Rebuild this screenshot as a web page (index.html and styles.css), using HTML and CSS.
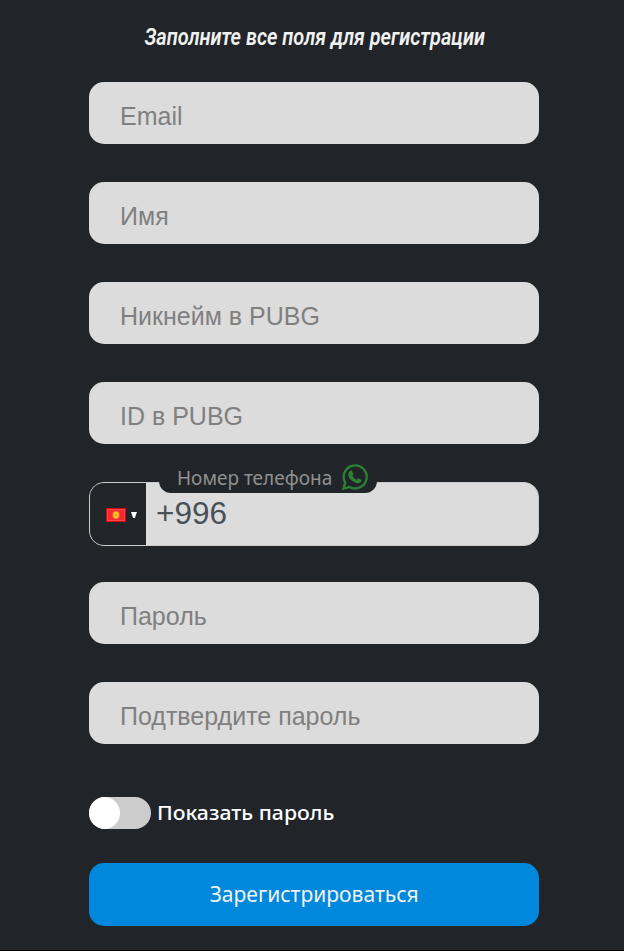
FILE: index.html
```html
<!DOCTYPE html>
<html lang="ru">
<head>
<meta charset="utf-8">
<title>Регистрация</title>
<link rel="stylesheet" href="styles.css">
</head>
<body>
<form class="form">
  <h1 class="title"><span class="title-text">Заполните все поля для регистрации</span></h1>
  <input class="field" type="email" placeholder="Email">
  <input class="field" type="text" placeholder="Имя">
  <input class="field" type="text" placeholder="Никнейм в PUBG">
  <input class="field" type="text" placeholder="ID в PUBG">
  <div class="phone">
    <div class="country">
      <svg class="flag" viewBox="0 0 20 14"><rect width="20" height="14" fill="#df0404"/><rect x="1" y="1" width="18" height="12" fill="#f9484c"/><rect x="2" y="2" width="16" height="10" fill="#f12a31"/><ellipse cx="10" cy="7" rx="3.7" ry="4" fill="#f7752a"/><ellipse cx="10" cy="7" rx="2.7" ry="3.2" fill="#ffc52e"/><ellipse cx="10" cy="7" rx="1" ry="1.6" fill="#f39a24"/></svg>
      <svg class="caret" viewBox="0 0 6 6"><path d="M0 0h6L3.8 6H2.2z" fill="#fff"/></svg>
    </div>
    <div class="number">+996</div>
    <label class="phone-label"><span class="phone-text">Номер телефона</span>
      <svg class="whatsapp" viewBox="0 0 26 26"><path d="M1.5 24.6 3.2 18.6A11.5 11.5 0 1 1 7.5 22.9Z" fill="none" stroke="#2c8134" stroke-width="2.3"/><path d="M8.3 6.8c.5-.5 1.5-.5 1.8.1l1.2 2.8c.2.6-.2 1.1-1.1 2.1 1.1 1.9 2.3 3 4.4 4 .8-.9 1.2-1.6 1.8-1.4l2.7 1.3c.7.4.3 1.7-.2 2.3-1.3 1.3-3.1 1.5-4.9.9-3.5-1.2-5.5-3.1-7.1-5.9-1.1-2-.7-4.7 1.4-6.2z" fill="#2c8134"/></svg>
    </label>
  </div>
  <input class="field" type="password" placeholder="Пароль">
  <input class="field" type="password" placeholder="Подтвердите пароль">
  <label class="switch-row"><span class="switch"><span class="knob"></span></span><span class="switch-text">Показать пароль</span></label>
  <button class="submit" type="button"><span class="submit-text">Зарегистрироваться</span></button>
</form>
</body>
</html>
```
FILE: styles.css
```css
* { box-sizing: border-box; }
body {
  margin: 0;
  height: 951px;
  background: #212529;
  border-bottom: 1px solid #000;
  font-family: "Liberation Sans", sans-serif;
  overflow: hidden;
}
.form {
  width: 450px;
  margin-left: 89px;
  padding-top: 22px;
}
.title {
  display: flex;
  justify-content: center;
  margin: 0 0 30px;
  padding-left: 2px;
  height: 30px;
  font: italic 600 24px/30px Roboto, sans-serif;
  color: #f1f1f1;
  white-space: nowrap;
}
.title-text { transform: scaleX(.832); }
.field {
  display: block;
  width: 450px;
  height: 62px;
  margin: 0 0 38px;
  padding: 6px 31px 0;
  border: 0;
  border-radius: 15px;
  background: #dcdcdc;
  font: 25px "Liberation Sans", sans-serif;
  outline: 0;
}
.field::placeholder { color: #808080; opacity: 1; }
.phone {
  position: relative;
  display: flex;
  width: 450px;
  height: 64px;
  margin-bottom: 36px;
  border: 1px solid #cacaca;
  border-radius: 15px;
  background: #dcdcdc;
}
.country {
  display: flex;
  align-items: center;
  width: 56px;
  padding: 2px 0 0 16px;
  gap: 5px;
  border-radius: 14px 0 0 14px;
  background: #212529;
}
.flag { width: 20px; height: 14px; }
.caret { width: 6px; height: 6px; }
.number {
  padding-left: 10px;
  font-size: 31.5px;
  line-height: 61px;
  color: #495057;
}
.phone-label {
  position: absolute;
  left: 69px;
  top: -21px;
  display: flex;
  align-items: flex-start;
  width: 218px;
  height: 31px;
  padding-left: 18px;
  border-radius: 0 0 12px 12px;
  background: #212529;
  font: 19px/32px "Noto Sans", sans-serif;
  color: #909090;
  white-space: nowrap;
}
.phone-text { width: 165px; }
.whatsapp { width: 26px; height: 26px; margin-top: 2px; flex: none; }
.switch-row {
  display: flex;
  align-items: center;
  gap: 6px;
  height: 32px;
  margin-top: 53px;
  font: 500 20px/32px "Noto Sans", sans-serif;
  color: #fff;
}
.switch {
  width: 62px;
  height: 32px;
  border-radius: 16px;
  background: #ccc;
}
.knob {
  display: block;
  width: 31px;
  height: 32px;
  border-radius: 50%;
  background: #fff;
}
.switch-text {
  transform: scaleX(1.06);
  transform-origin: left;
  white-space: nowrap;
}
.submit {
  display: block;
  width: 450px;
  height: 63px;
  margin: 34px 0 0;
  padding: 0 0 2px;
  border: 0;
  border-radius: 15px;
  background: #0088dd;
  font: 22px/61px "Noto Sans", sans-serif;
  color: #f1f1f1;
}
.submit-text { display: inline-block; transform: scaleX(.957); }
```
